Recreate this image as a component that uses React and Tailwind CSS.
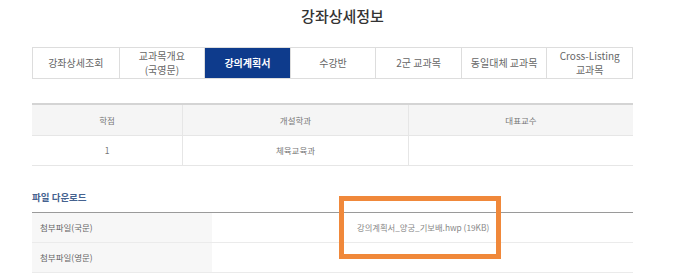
const tabs = [
  { label: ['강좌상세조회'] },
  { label: ['교과목개요', '(국영문)'] },
  { label: ['강의계획서'], active: true },
  { label: ['수강반'] },
  { label: ['2군 교과목'] },
  { label: ['동일대체 교과목'] },
  { label: ['Cross-Listing', '교과목'] },
];

export default function App() {
  return (
    <div className="w-[685px] h-[280px] bg-white overflow-hidden" style={{ fontFamily: '"Noto Sans CJK KR", "Noto Sans", sans-serif' }}>
      <h1 className="pt-[7px] h-[47px] text-center text-[15px] leading-[18px] font-medium text-[#333]">강좌상세정보</h1>

      <div className="ml-[32px] w-[601px]">
        {/* tabs */}
        <div className="grid grid-cols-7 h-[32px] border border-[#ddd]">
          {tabs.map((t, i) => (
            <div
              key={i}
              className={`flex flex-col items-center justify-center text-[10px] leading-[14px] ${i > 0 ? 'border-l border-[#ddd]' : ''} ${t.active ? 'bg-[#0e3b8c] text-white font-bold' : 'text-[#666]'}`}
            >
              {t.label.map(l => <span key={l}>{l}</span>)}
            </div>
          ))}
        </div>

        {/* course info */}
        <div className="mt-[24px] border-t-2 border-[#d4d4d4] text-[8.5px] text-[#777]">
          <div className="grid grid-cols-[150px_226px_1fr] h-[31px] bg-[#f5f5f5] border-b border-[#e6e6e6]">
            <div className="flex items-center justify-center">학점</div>
            <div className="flex items-center justify-center border-l border-[#e6e6e6]">개설학과</div>
            <div className="flex items-center justify-center border-l border-[#e6e6e6]">대표교수</div>
          </div>
          <div className="grid grid-cols-[150px_226px_1fr] h-[30px] border-b border-[#e6e6e6]">
            <div className="flex items-center justify-center">1</div>
            <div className="flex items-center justify-center border-l border-[#e6e6e6]">체육교육과</div>
            <div className="border-l border-[#e6e6e6]"></div>
          </div>
        </div>

        {/* file download */}
        <h2 className="mt-[24px] h-[22px] text-[9.5px] leading-[14px] font-bold text-[#45628f]">파일 다운로드</h2>
        <div className="relative border-t border-[#9a9a9a] text-[8.5px] text-[#666]">
          <div className="grid grid-cols-[180px_1fr] h-[30px] border-b border-[#ebebeb]">
            <div className="flex items-center pl-[8px] bg-[#f7f7f7]">첨부파일(국문)</div>
            <div className="flex items-center pl-[145px] text-[8.3px] text-[#888]">강의계획서_양궁_기보배.hwp (19KB)</div>
          </div>
          <div className="grid grid-cols-[180px_1fr] h-[30px] border-b border-[#ebebeb]">
            <div className="flex items-center pl-[8px] bg-[#f7f7f7]">첨부파일(영문)</div>
            <div></div>
          </div>
          <div className="absolute left-[307px] top-[-17px] w-[162px] h-[63px] border-[5px] border-[#f0883a]"></div>
        </div>
      </div>
    </div>
  );
}
